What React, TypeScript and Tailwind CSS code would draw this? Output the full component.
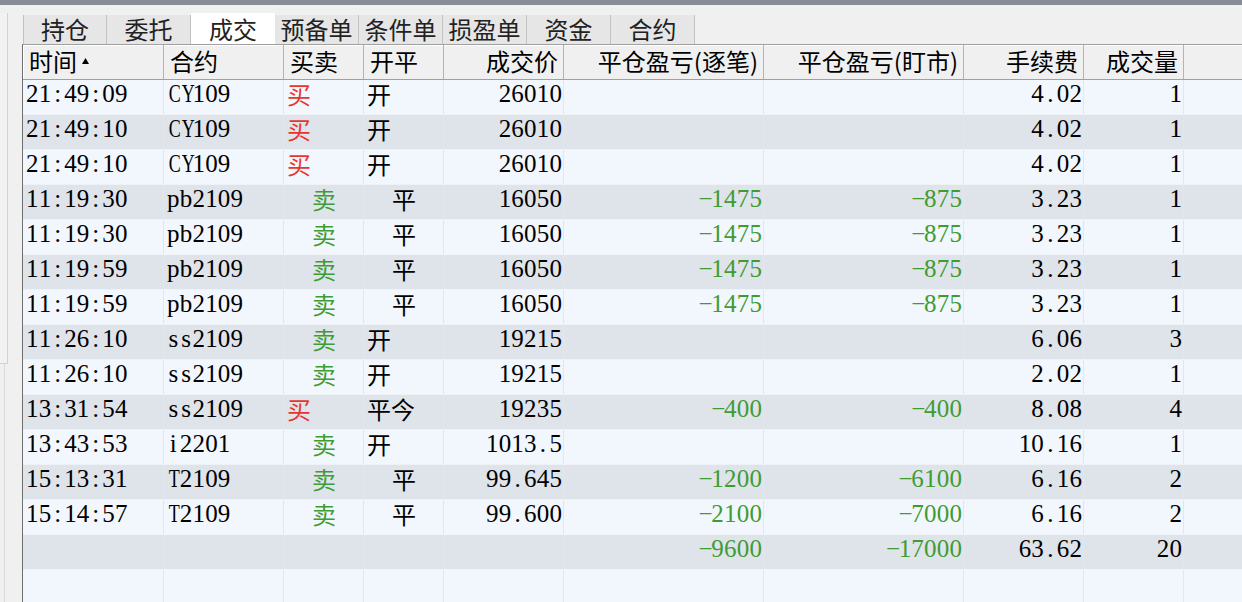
import React from "react";

const tabs = ["持仓", "委托", "成交", "预备单", "条件单", "损盈单", "资金", "合约"];

const headers = ["时间", "合约", "买卖", "开平", "成交价", "平仓盈亏(逐笔)", "平仓盈亏(盯市)", "手续费", "成交量"];

const widths = [
  "w-[141px]",
  "w-[120px]",
  "w-[80px]",
  "w-[80px]",
  "w-[120px]",
  "w-[200px]",
  "w-[200px]",
  "w-[120px]",
  "w-[100px]",
];

const rows: string[][] = [
  ["21:49:09", "CY109", "买", "开", "26010", "", "", "4.02", "1"],
  ["21:49:10", "CY109", "买", "开", "26010", "", "", "4.02", "1"],
  ["21:49:10", "CY109", "买", "开", "26010", "", "", "4.02", "1"],
  ["11:19:30", "pb2109", "卖", "平", "16050", "-1475", "-875", "3.23", "1"],
  ["11:19:30", "pb2109", "卖", "平", "16050", "-1475", "-875", "3.23", "1"],
  ["11:19:59", "pb2109", "卖", "平", "16050", "-1475", "-875", "3.23", "1"],
  ["11:19:59", "pb2109", "卖", "平", "16050", "-1475", "-875", "3.23", "1"],
  ["11:26:10", "ss2109", "卖", "开", "19215", "", "", "6.06", "3"],
  ["11:26:10", "ss2109", "卖", "开", "19215", "", "", "2.02", "1"],
  ["13:31:54", "ss2109", "买", "平今", "19235", "-400", "-400", "8.08", "4"],
  ["13:43:53", "i2201", "卖", "开", "1013.5", "", "", "10.16", "1"],
  ["15:13:31", "T2109", "卖", "平", "99.645", "-1200", "-6100", "6.16", "2"],
  ["15:14:57", "T2109", "卖", "平", "99.600", "-2100", "-7000", "6.16", "2"],
  ["", "", "", "", "", "-9600", "-17000", "63.62", "20"],
  ["", "", "", "", "", "", "", "", ""],
];

// SimSun-style half-width text: every ascii char takes the same cell
function Mono({ text }: { text: string }) {
  return (
    <>
      {text
        .replace("-", "−")
        .split("")
        .map((ch, i) => (
          <span
            key={i}
            className={`inline-block w-[12.7px] text-center ${/[A-Z]/.test(ch) ? "scale-x-[0.72]" : ""}`}
          >
            {ch}
          </span>
        ))}
    </>
  );
}

function BodyCell({ col, value }: { col: number; value: string }) {
  if (col === 2 || col === 3) {
    const indent = value === "卖" || value === "平";
    const color = value === "买" ? "text-[#e8362e]" : value === "卖" ? "text-[#3f9c33]" : "text-black";
    return (
      <div
        className={`${widths[col]} h-full shrink-0 whitespace-nowrap border-r border-[#e3e6eb] font-['Noto_Sans_CJK_SC',sans-serif] text-[24px] leading-[27px] ${color} ${
          indent ? "pl-[28px]" : "pl-[3px]"
        }`}
      >
        {value}
      </div>
    );
  }
  const right = col >= 4;
  const green = col === 5 || col === 6;
  return (
    <div
      className={`${widths[col]} h-full shrink-0 whitespace-nowrap border-r border-[#e3e6eb] ${
        right ? "pr-[1px] text-right" : "pl-[3px] text-left"
      } ${green ? "text-[#3f9c33]" : "text-black"}`}
    >
      <Mono text={value} />
    </div>
  );
}

export default function App() {
  return (
    <div className="flex h-[602px] w-[1242px] flex-col overflow-hidden bg-[#f0f0f0] font-['Noto_Sans_CJK_SC',sans-serif]">
      <div className="h-[5px] shrink-0 bg-[#878d97]" />

      <div className="flex min-h-0 flex-1">
        {/* left side panel edge */}
        <div className="flex w-[22px] shrink-0 flex-col">
          <div className="mt-[8px] h-[351px] w-[8px] border-r border-b border-[#d2d2d2] bg-[#f2f2f2]" />
          <div className="ml-[4px] flex-1 border-l border-[#dadada]" />
        </div>

        <div className="flex min-w-0 flex-1 flex-col">
          {/* tabs */}
          <div className="flex h-[39px] shrink-0 items-end pl-[1px]">
            {tabs.map((t, i) =>
              t === "成交" ? (
                <div
                  key={t}
                  className="h-[31px] w-[84px] shrink-0 bg-white pt-[2px] text-center text-[24px] leading-[27px] text-[#222]"
                >
                  {t}
                </div>
              ) : (
                <div
                  key={t}
                  className={`h-[29px] w-[84px] shrink-0 border-r border-[#c2c2c2] bg-[#e6e6e6] text-center text-[24px] leading-[27px] text-[#222] ${
                    i === 0 ? "border-l" : ""
                  }`}
                >
                  {t}
                </div>
              )
            )}
          </div>

          {/* table */}
          <div className="flex min-h-0 flex-1 flex-col border-t border-l border-t-[#a0a0a0] border-l-[#6f6f6f]">
            <div className="flex h-[35px] shrink-0 border-b border-[#a0a0a0] bg-[#f0f0f0] shadow-[inset_1px_1px_0_#ffffff]">
              {headers.map((h, i) => (
                <div
                  key={h}
                  className={`${widths[i]} flex h-[34px] shrink-0 items-start whitespace-nowrap border-r border-[#b4b4b4] pt-[1px] text-[24px] leading-[30px] text-black ${
                    i >= 4 ? "justify-end pr-[5px]" : "pl-[6px]"
                  }`}
                >
                  {h}
                  {i === 0 && (
                    <svg className="mt-[12px] ml-[5px]" width="7" height="6" viewBox="0 0 7 6">
                      <path d="M3.5 0L7 6H0z" fill="#000" />
                    </svg>
                  )}
                </div>
              ))}
              <div className="flex-1" />
            </div>

            {rows.map((r, ri) => (
              <div
                key={ri}
                className={`flex h-[35px] shrink-0 border-b border-[#eef1f5] font-['Liberation_Serif','Noto_Sans_CJK_SC',serif] text-[25px] leading-[27px] ${
                  ri % 2 === 0 ? "bg-[#f2f6fd]" : "bg-[#dfe3ea]"
                }`}
              >
                {r.map((v, ci) => (
                  <BodyCell key={ci} col={ci} value={v} />
                ))}
                <div className="flex-1" />
              </div>
            ))}
          </div>
        </div>
      </div>
    </div>
  );
}
